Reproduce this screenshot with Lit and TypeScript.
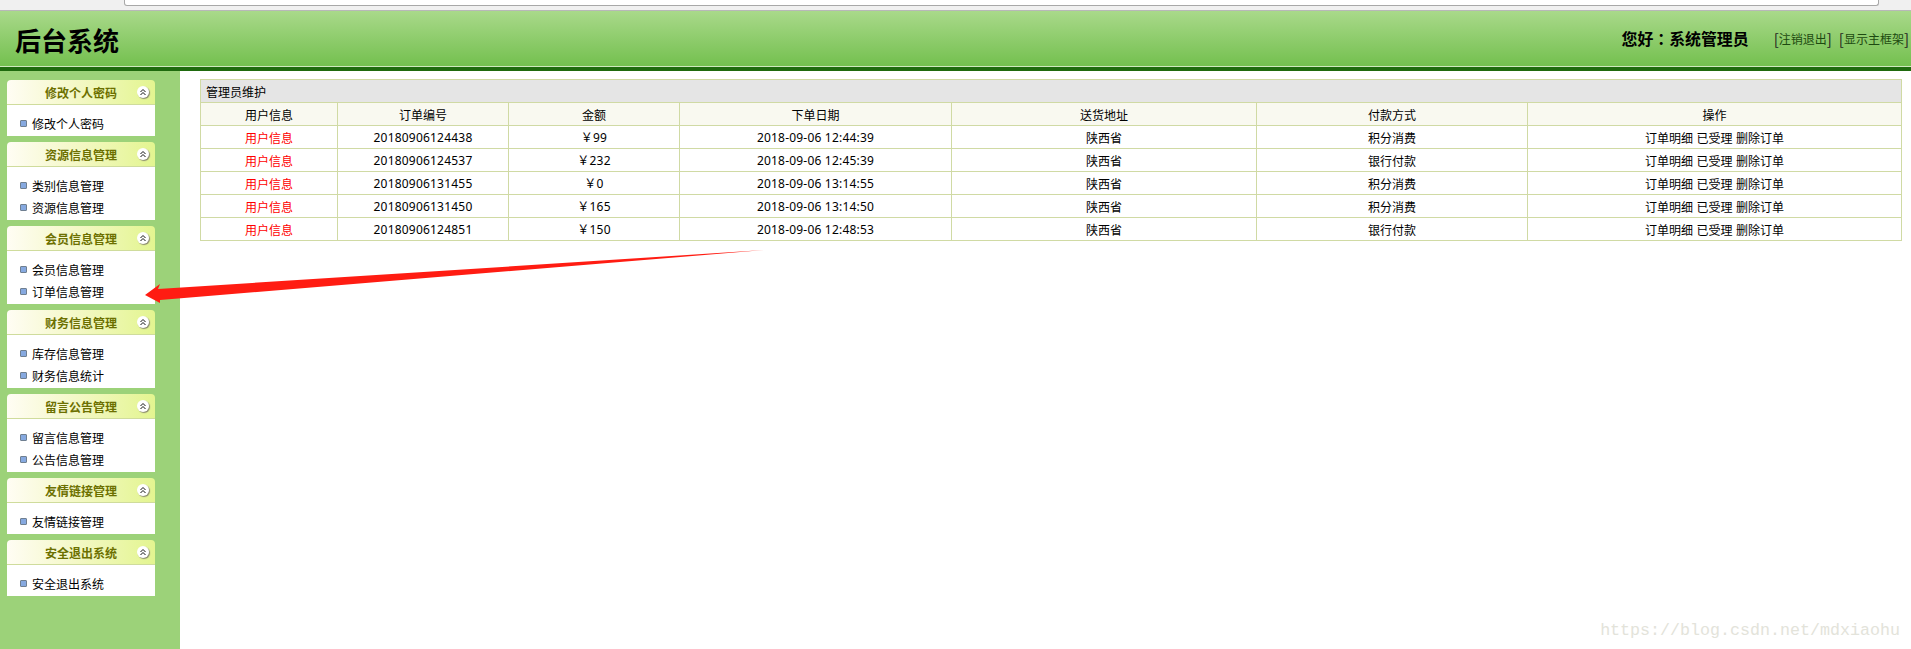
import { LitElement, html, css, svg } from "lit";
import { customElement } from "lit/decorators.js";

const MENU = [
  { title: "修改个人密码", items: ["修改个人密码"] },
  { title: "资源信息管理", items: ["类别信息管理", "资源信息管理"] },
  { title: "会员信息管理", items: ["会员信息管理", "订单信息管理"] },
  { title: "财务信息管理", items: ["库存信息管理", "财务信息统计"] },
  { title: "留言公告管理", items: ["留言信息管理", "公告信息管理"] },
  { title: "友情链接管理", items: ["友情链接管理"] },
  { title: "安全退出系统", items: ["安全退出系统"] },
];

const HEADS = ["用户信息", "订单编号", "金额", "下单日期", "送货地址", "付款方式", "操作"];
const COLS = [137, 171, 171, 272, 305, 271, 374];

const ROWS = [
  ["20180906124438", "￥99", "2018-09-06 12:44:39", "积分消费"],
  ["20180906124537", "￥232", "2018-09-06 12:45:39", "银行付款"],
  ["20180906131455", "￥0", "2018-09-06 13:14:55", "积分消费"],
  ["20180906131450", "￥165", "2018-09-06 13:14:50", "积分消费"],
  ["20180906124851", "￥150", "2018-09-06 12:48:53", "银行付款"],
];

@customElement("app-root")
export class AppRoot extends LitElement {
  static styles = css`
    :host {
      display: block;
      position: relative;
      height: 100vh;
      overflow: hidden;
      background: #fff;
      color: #000;
      font-family: "Noto Sans", "Noto Sans CJK SC", sans-serif;
      font-size: 12px;
    }
    .chrome {
      height: 10px;
      background: #f0f0f0;
      border-bottom: 1px solid #b8b8b8;
      padding: 0 32px 0 124px;
    }
    .address {
      height: 5px;
      background: #fff;
      border: 1px solid #a8a8a8;
      border-top: 0;
      border-radius: 0 0 3px 3px;
    }
    .header {
      height: 55px;
      display: flex;
      align-items: center;
      justify-content: space-between;
      padding: 0 2px 0 15px;
      background: linear-gradient(#a9d98a, #74c04f);
      border-bottom: 1px solid #cfe8bd;
    }
    .brand {
      font-size: 26px;
      font-weight: 700;
      font-family: "Noto Sans CJK SC", sans-serif;
      line-height: 1;
      margin-top: 2px;
    }
    .user {
      display: flex;
      align-items: center;
      margin-top: -1px;
    }
    .greeting {
      font-size: 15.9px;
      font-weight: 700;
      font-family: "Noto Sans CJK SC", sans-serif;
      margin-right: 18px;
      text-spacing-trim: space-all;
      white-space: nowrap;
    }
    .colon {
      font-family: "Noto Sans CJK TC", sans-serif;
    }
    .link {
      color: #1d4a10;
      font-size: 12px;
      font-family: "Noto Sans CJK SC", sans-serif;
      margin-left: 7px;
      display: flex;
      align-items: center;
    }
    .link b {
      font-weight: 400;
      font-size: 15px;
      line-height: 1;
      color: #222;
    }
    .rule {
      height: 4px;
      background: #1f6a0e;
    }
    .main {
      display: flex;
      height: 578px;
    }
    .side {
      width: 180px;
      flex: none;
      box-sizing: border-box;
      background: #9cd279;
      padding: 9px 25px 0 7px;
      display: flex;
      flex-direction: column;
      gap: 6px;
    }
    .panel-head {
      height: 24px;
      display: flex;
      align-items: center;
      justify-content: center;
      position: relative;
      border-radius: 4px 4px 0 0;
      border-bottom: 1px solid #cfdc9c;
      background: linear-gradient(90deg, #fffdf4, #f4f8c8 45%, #e3f590);
      color: #6c7000;
      font-weight: 700;
      font-family: "Noto Sans CJK SC", sans-serif;
    }
    .toggle {
      position: absolute;
      right: 6px;
      top: 6px;
      width: 12px;
      height: 12px;
      border-radius: 50%;
      background: #fff;
      box-shadow: 1px 1px 1px #8a8a70;
      display: flex;
      align-items: center;
      justify-content: center;
    }
    .panel-body {
      background: #fff;
      padding: 7px 0 2px 13px;
    }
    .item {
      height: 22px;
      display: flex;
      align-items: center;
      gap: 5px;
      font-family: "Noto Sans CJK SC", sans-serif;
    }
    .bullet {
      width: 5px;
      height: 5px;
      border: 1px solid #6f7f90;
      border-radius: 1px;
      background: #86a9e0;
    }
    .content {
      flex: 1;
      padding: 8px 10px 0 20px;
      min-width: 0;
    }
    table {
      width: 1701px;
      table-layout: fixed;
      border-collapse: collapse;
      font-family: "Noto Sans CJK SC", sans-serif;
    }
    tr {
      height: 23px;
    }
    th,
    td {
      border: 1px solid #d0daa4;
      padding: 1px 0 0;
      text-align: center;
      font-weight: 400;
      line-height: 1;
    }
    .caption {
      background: #e5e5e5;
      text-align: left;
      padding-left: 5px;
    }
    .heads th {
      background: #f9f9f0;
    }
    .red {
      color: #ff0000;
    }
    .num {
      font-family: "Noto Sans", "Noto Sans CJK SC", sans-serif;
      letter-spacing: 0.2px;
    }
    .ops {
      word-spacing: 0.8px;
    }
    .arrow {
      position: absolute;
      left: 0;
      top: 0;
      pointer-events: none;
    }
    .mark {
      position: absolute;
      right: 11px;
      bottom: 9px;
      font-family: "Liberation Mono", monospace;
      font-size: 16.67px;
      line-height: 1;
      color: #e3e3da;
    }
  `;

  private chevrons() {
    return html`<svg width="8" height="8" viewBox="0 0 8 8">
      ${svg`<path d="M1.5 4 L4 1.5 L6.5 4 M1.5 7 L4 4.5 L6.5 7" fill="none" stroke="#111" stroke-width="1"/>`}
    </svg>`;
  }

  render() {
    return html`
      <div class="chrome"><div class="address"></div></div>
      <header class="header">
        <div class="brand">后台系统</div>
        <div class="user">
          <span class="greeting">您好<span class="colon">：</span>系统管理员</span>
          <span class="link"><b>[</b>注销退出<b>]</b></span>
          <span class="link"><b>[</b>显示主框架<b>]</b></span>
        </div>
      </header>
      <div class="rule"></div>
      <div class="main">
        <aside class="side">
          ${MENU.map(
            (m) => html`
              <section>
                <div class="panel-head">
                  ${m.title}
                  <span class="toggle">${this.chevrons()}</span>
                </div>
                <div class="panel-body">
                  ${m.items.map(
                    (i) => html`<div class="item"><span class="bullet"></span>${i}</div>`
                  )}
                </div>
              </section>
            `
          )}
        </aside>
        <div class="content">
          <table>
            <colgroup>
              ${COLS.map((w) => html`<col style="width:${w}px" />`)}
            </colgroup>
            <tr><th class="caption" colspan="7">管理员维护</th></tr>
            <tr class="heads">${HEADS.map((h) => html`<th>${h}</th>`)}</tr>
            ${ROWS.map(
              (r) => html`<tr>
                <td class="red">用户信息</td>
                <td class="num">${r[0]}</td>
                <td class="num">${r[1]}</td>
                <td class="num">${r[2]}</td>
                <td>陕西省</td>
                <td>${r[3]}</td>
                <td class="ops">订单明细 已受理 删除订单</td>
              </tr>`
            )}
          </table>
        </div>
      </div>
      <svg class="arrow" width="800" height="320" viewBox="0 0 800 320">
        ${svg`<path d="M145 295 L160 284 L158 289 L765 250 L160 300 L160 303 Z" fill="#ff1c12"/>`}
      </svg>
      <div class="mark">https://blog.csdn.net/mdxiaohu</div>
    `;
  }
}
